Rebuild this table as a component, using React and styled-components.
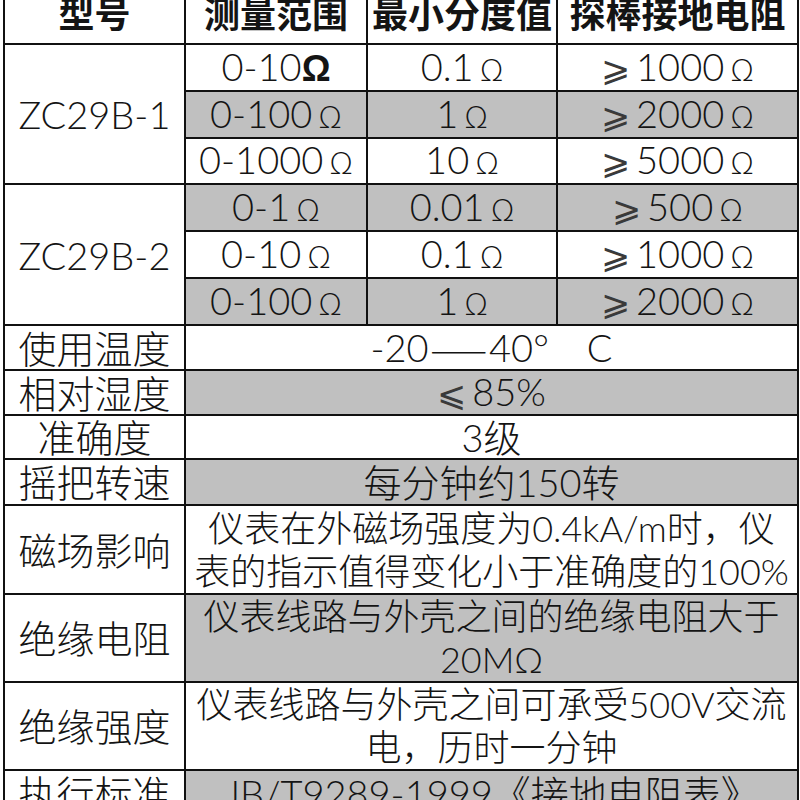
import React from 'react';
import styled, { createGlobalStyle } from 'styled-components';

const GlobalStyle = createGlobalStyle`
  html, body {
    margin: 0;
    padding: 0;
    background: #ffffff;
    overflow: hidden;
  }
`;

const Page = styled.div`
  width: 800px;
  height: 800px;
  overflow: hidden;
  padding-left: 3px;
  box-sizing: border-box;
`;

const Sheet = styled.table`
  margin-top: -12px;
  width: 794px;
  table-layout: fixed;
  border-collapse: collapse;
  font-family: "Lato", "Noto Sans CJK SC", "DejaVu Sans", sans-serif;
  font-weight: 300;
  font-size: 38px;
  color: #141414;

  td, th {
    border: 2px solid #111;
    padding: 0;
    text-align: center;
    vertical-align: middle;
    white-space: nowrap;
  }
`;

const HeadRow = styled.tr`
  height: 55px;
`;

const HeadCell = styled.th`
  font-family: "Noto Sans CJK SC", sans-serif;
  font-size: 36px;
  font-weight: 700;
  line-height: 40px;
  padding-bottom: 9px !important;
  background: #ffffff;
`;

const Row = styled.tr`
  height: ${p => p.$h}px;
`;

const LabelCell = styled.td`
  background: #ffffff;
  line-height: 40px;
`;

const ValueCell = styled.td`
  background: ${p => (p.$shade ? '#c0c0c0' : '#ffffff')};
  font-size: ${p => (p.$wide ? 36 : 38)}px;
  line-height: ${p => (p.$wide ? 43 : 40)}px;
`;

const Ohm = styled.span`
  font-family: ${p => (p.$bold ? '"Liberation Sans", sans-serif' : '"DejaVu Sans", sans-serif')};
  font-weight: ${p => (p.$bold ? 700 : 200)};
  font-size: ${p => (p.$bold ? 36 : 31)}px;
  margin-left: ${p => (p.$bold ? 0 : 6)}px;
`;

const Cmp = styled.span`
  font-family: "DejaVu Sans", sans-serif;
  font-weight: 200;
  font-size: 35px;
  color: #3a3a3a;
  margin-right: 6px;
`;

const Dash = styled.span`
  font-family: "Noto Sans CJK SC", sans-serif;
  font-size: 34px;
  margin: 0 2px;
`;

const ranges = [
  { model: 'ZC29B-1', rows: [['0-10', true, '0.1', '1000'], ['0-100', false, '1', '2000'], ['0-1000', false, '10', '5000']] },
  { model: 'ZC29B-2', rows: [['0-1', false, '0.01', '500'], ['0-10', false, '0.1', '1000'], ['0-100', false, '1', '2000']] },
];

const rangeHeights = [47, 47, 46, 47, 47, 47];

const specs = [
  { label: '使用温度', h: 45, value: <>-20<Dash>——</Dash>40°　C</> },
  { label: '相对湿度', h: 45, value: <><Cmp>⩽</Cmp>85%</> },
  { label: '准确度', h: 44, value: '3级' },
  { label: '摇把转速', h: 46, value: '每分钟约150转' },
  { label: '磁场影响', h: 89, wide: true, value: <>仪表在外磁场强度为0.4kA/m时，仪<br />表的指示值得变化小于准确度的100%</> },
  { label: '绝缘电阻', h: 88, wide: true, value: <>仪表线路与外壳之间的绝缘电阻大于<br />20MΩ</> },
  { label: '绝缘强度', h: 86, wide: true, value: <>仪表线路与外壳之间可承受500V交流<br />电，历时一分钟</> },
  { label: '执行标准', h: 46, value: 'JB/T9289-1999《接地电阻表》' },
];

export default function App() {
  let idx = 0;
  return (
    <Page>
      <GlobalStyle />
      <Sheet>
        <colgroup>
          <col style={{ width: 181 }} />
          <col style={{ width: 182 }} />
          <col style={{ width: 190 }} />
          <col style={{ width: 241 }} />
        </colgroup>
        <tbody>
          <HeadRow>
            <HeadCell>型号</HeadCell>
            <HeadCell>测量范围</HeadCell>
            <HeadCell>最小分度值</HeadCell>
            <HeadCell>探棒接地电阻</HeadCell>
          </HeadRow>
          {ranges.map(group =>
            group.rows.map((r, i) => {
              const n = idx++;
              const shade = n % 2 === 1;
              return (
                <Row key={group.model + i} $h={rangeHeights[n]}>
                  {i === 0 && <LabelCell rowSpan={3}>{group.model}</LabelCell>}
                  <ValueCell $shade={shade}>
                    {r[0]}<Ohm $bold={r[1]}>Ω</Ohm>
                  </ValueCell>
                  <ValueCell $shade={shade}>
                    {r[2]}<Ohm>Ω</Ohm>
                  </ValueCell>
                  <ValueCell $shade={shade}>
                    <Cmp>⩾</Cmp>{r[3]}<Ohm>Ω</Ohm>
                  </ValueCell>
                </Row>
              );
            })
          )}
          {specs.map(s => {
            const n = idx++;
            return (
              <Row key={s.label} $h={s.h}>
                <LabelCell>{s.label}</LabelCell>
                <ValueCell colSpan={3} $shade={n % 2 === 1} $wide={s.wide}>
                  {s.value}
                </ValueCell>
              </Row>
            );
          })}
        </tbody>
      </Sheet>
    </Page>
  );
}
